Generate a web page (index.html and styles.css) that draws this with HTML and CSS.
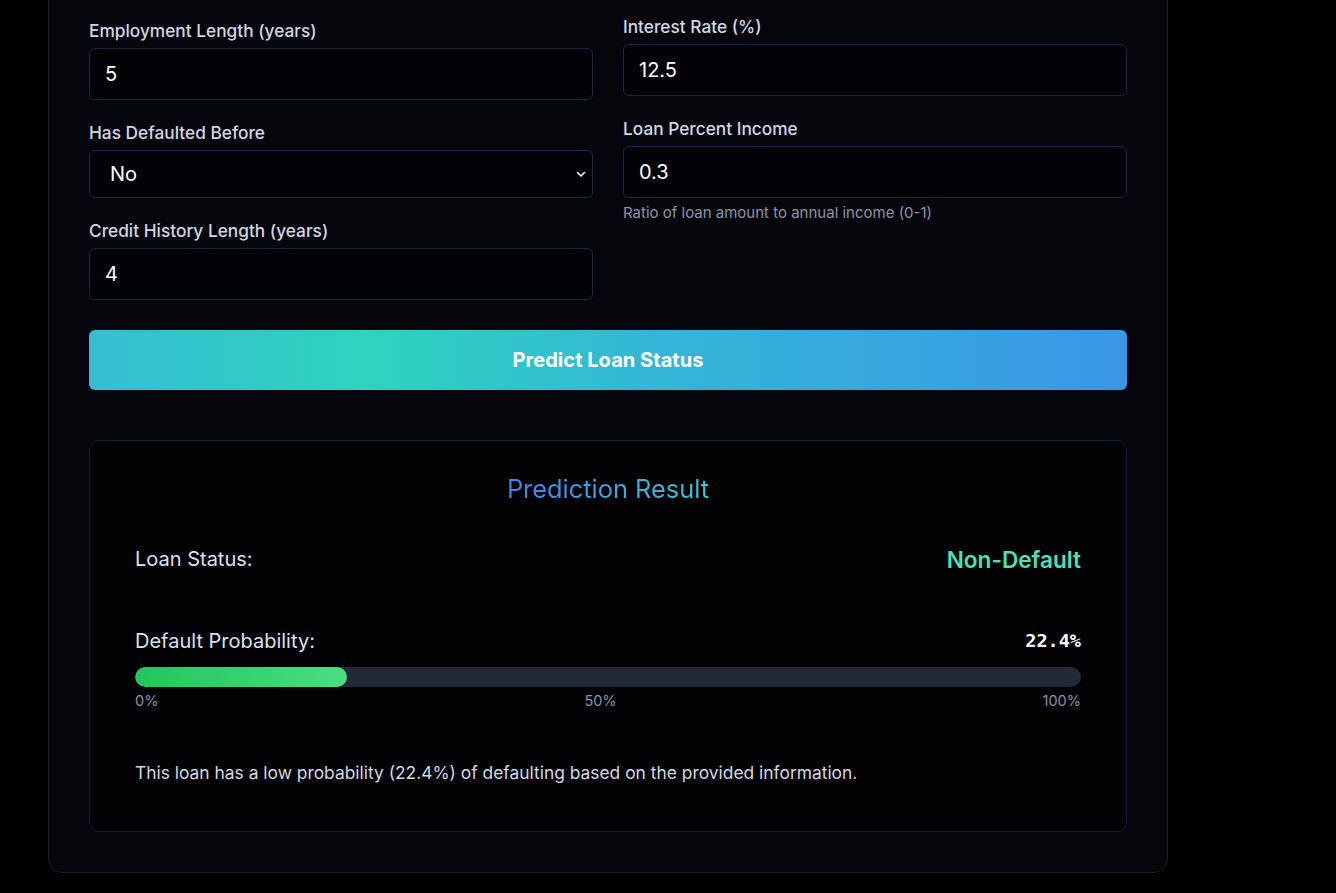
FILE: index.html
```html
<!DOCTYPE html>
<html lang="en">
<head>
<meta charset="utf-8">
<title>Loan Default Predictor</title>
<link rel="stylesheet" href="styles.css">
</head>
<body>
<main class="card">
  <form class="form">
    <div class="cols">
      <div class="col col-left">
        <div class="field">
          <label class="label">Employment Length (years)</label>
          <input class="input" type="text" value="5">
        </div>
        <div class="field">
          <label class="label">Has Defaulted Before</label>
          <div class="select-wrap">
            <select class="select"><option>No</option><option>Yes</option></select>
            <svg class="chev" width="12" height="12" viewBox="0 0 12 12"><path d="M2.5 4.5 L6 8 L9.5 4.5" fill="none" stroke="#ffffff" stroke-width="1.6" stroke-linecap="round" stroke-linejoin="round"/></svg>
          </div>
        </div>
        <div class="field">
          <label class="label">Credit History Length (years)</label>
          <input class="input" type="text" value="4">
        </div>
      </div>
      <div class="col col-right">
        <div class="field">
          <label class="label">Interest Rate (%)</label>
          <input class="input" type="text" value="12.5">
        </div>
        <div class="field">
          <label class="label">Loan Percent Income</label>
          <input class="input" type="text" value="0.3">
          <p class="help">Ratio of loan amount to annual income (0-1)</p>
        </div>
      </div>
    </div>
    <button class="btn" type="button">Predict Loan Status</button>
  </form>

  <section class="result">
    <h2 class="result-title">Prediction Result</h2>
    <div class="result-body">
      <div class="row row-status">
        <span class="row-label">Loan Status:</span>
        <span class="status">Non-Default</span>
      </div>
      <div class="row row-prob">
        <span class="row-label">Default Probability:</span>
        <span class="prob">22.4%</span>
      </div>
      <div class="bar"><div class="bar-fill" style="width:22.4%"></div></div>
      <div class="scale"><span>0%</span><span>50%</span><span>100%</span></div>
      <p class="summary">This loan has a low probability (22.4%) of defaulting based on the provided information.</p>
    </div>
  </section>
</main>
</body>
</html>
```
FILE: styles.css
```css
* { box-sizing: border-box; }
html, body { margin: 0; padding: 0; background: #000; }
body {
  font-family: Inter, "Noto Sans", sans-serif;
  color: #d6dcea;
  overflow: hidden;
}
.card {
  width: 1120px;
  margin: -26px 0 0 48px;
  padding: 40px;
  background: #05060b;
  border: 1px solid #1b1e2a;
  border-radius: 14px;
}
.form { display: flex; flex-direction: column; }
.cols {
  display: grid;
  grid-template-columns: 1fr 1fr;
  column-gap: 30px;
  align-items: start;
}
.col { display: flex; flex-direction: column; gap: 21px; }
.col-left { margin-top: 4px; }
.field { display: flex; flex-direction: column; }
.label {
  font-size: 17.3px;
  line-height: 24px;
  font-weight: 500;
  color: #d1d7e4;
  margin-bottom: 5px;
}
.input, .select {
  height: 52px;
  width: 100%;
  padding: 0 15px;
  background: #020307;
  border: 1px solid #1a2847;
  border-radius: 6px;
  color: #ffffff;
  font-family: Inter, sans-serif;
  font-size: 20px;
  outline: none;
}
.select-wrap { position: relative; }
.select {
  height: 48px;
  padding: 0 20px;
  font-size: 20px;
  -webkit-appearance: none;
  appearance: none;
}
.chev { position: absolute; right: 6px; top: 18px; }
.help {
  margin: 5px 0 0;
  font-size: 15px;
  line-height: 20px;
  color: #8c94a8;
}
.btn {
  margin-top: 30px;
  height: 60px;
  border: 0;
  border-radius: 6px;
  background: linear-gradient(90deg, #35bed3 0%, #2ed3be 27%, #33b6d6 55%, #3a96e7 100%);
  color: #ffffff;
  font-family: Inter, sans-serif;
  font-weight: 700;
  font-size: 20.1px;
}
.result {
  margin-top: 50px;
  padding: 32px 30px 30px;
  background: #020204;
  border: 1px solid #14213d;
  border-radius: 10px;
  text-align: center;
}
.result-title {
  display: inline-block;
  margin: 0;
  font-family: Inter, sans-serif;
  font-weight: 400;
  font-size: 25.4px;
  line-height: 32px;
  background: linear-gradient(90deg, #3b82f6 0%, #40c4cf 100%);
  -webkit-background-clip: text;
  background-clip: text;
  color: transparent;
}
.result-body { padding: 0 15px 16px; text-align: left; }
.row {
  display: flex;
  justify-content: space-between;
  align-items: center;
}
.row-status { margin-top: 40px; height: 28px; }
.row-prob { margin-top: 54px; height: 28px; }
.row-label { font-size: 20px; line-height: 28px; color: #dbe1ee; }
.status {
  font-size: 22.6px;
  font-weight: 600;
  color: #4fe0b2;
}
.prob {
  font-family: "DejaVu Sans Mono", monospace;
  font-weight: 700;
  font-size: 18.5px;
  line-height: 26px;
  color: #ffffff;
}
.bar {
  margin-top: 12px;
  height: 20px;
  border-radius: 10px;
  background: #222a38;
  overflow: hidden;
}
.bar-fill {
  height: 100%;
  border-radius: 10px;
  background: linear-gradient(90deg, #22c55e, #4ade80);
}
.scale {
  display: flex;
  justify-content: space-between;
  margin-top: 4px;
  font-size: 14.5px;
  line-height: 20px;
  color: #8c94a8;
}
.summary {
  margin: 50px 0 0;
  font-size: 17.4px;
  line-height: 24px;
  color: #d3d8e2;
}
```
